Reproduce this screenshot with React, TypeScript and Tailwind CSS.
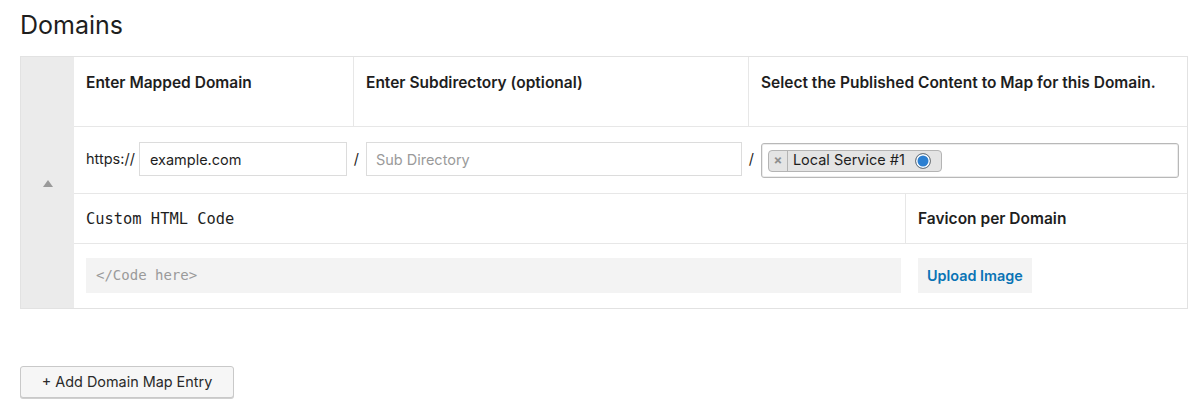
import React from "react";

const font = "font-['Inter','Noto_Sans',sans-serif]";

export default function App() {
  return (
    <div className={`w-[1200px] h-[415px] bg-white px-5 pt-[7px] text-[#1e1e1e] ${font}`}>
      <h1 className="text-[25px] leading-[36px] font-normal text-[#1e1e1e]">Domains</h1>

      <div className="mt-[13px] flex border border-[#e2e2e2] w-[1168px]">
        {/* drag handle column */}
        <div className="w-[53px] shrink-0 bg-[#ebebeb] flex items-center justify-center">
          <span className="block w-0 h-0 border-l-[5px] border-r-[5px] border-b-[7px] border-l-transparent border-r-transparent border-b-[#9a9a9a] mt-[2px]" />
        </div>

        <div className="flex-1 flex flex-col">
          {/* header row */}
          <div className="flex h-[70px] border-b border-[#e7e7e7] text-[15.5px] font-semibold">
            <div className="w-[280px] px-3 pt-[14px] border-r border-[#e7e7e7]">Enter Mapped Domain</div>
            <div className="w-[395px] px-3 pt-[14px] border-r border-[#e7e7e7]">Enter Subdirectory (optional)</div>
            <div className="flex-1 px-3 pt-[14px]">Select the Published Content to Map for this Domain.</div>
          </div>

          {/* inputs row */}
          <div className="flex items-start h-[67px] border-b border-[#e7e7e7] pl-3 pr-2 pt-[15px] text-[14.5px]">
            <span className="mr-[4px] leading-[34px]">https://</span>
            <input
              className="w-[208px] h-[34px] border border-[#dcdcdc] px-[10px] text-[14.5px] text-[#1e1e1e] outline-none"
              defaultValue="example.com"
            />
            <span className="w-[19px] text-center leading-[34px]">/</span>
            <input
              className="w-[376px] h-[34px] border border-[#dcdcdc] px-[9px] text-[14.5px] placeholder:text-[#9a9a9a] outline-none"
              placeholder="Sub Directory"
            />
            <span className="w-[19px] text-center leading-[34px]">/</span>
            <div className="flex-1 h-[35px] mt-[1px] border border-[#b8b8b8] rounded-[3px] flex items-center px-[6px] shadow-[inset_0_0_0_1px_#ececec]">
              <div className="flex items-center h-[22px] border border-[#b4b4b4] bg-[#e4e4e4] rounded-[4px] text-[14.5px] leading-none">
                <span className="w-[19px] h-full flex items-center justify-center text-[13px] font-bold text-[#8f8f8f] border-r border-[#b4b4b4]">×</span>
                <span className="pl-[5px] pr-[10px]">Local Service #1</span>
                <span className="w-[16px] h-[16px] rounded-full bg-[#2b7fd1] border-[1.5px] border-[#7a7a7a] shadow-[inset_0_0_0_1.5px_#ffffff] mr-[10px]" />
              </div>
            </div>
          </div>

          {/* custom html header row */}
          <div className="flex h-[50px] border-b border-[#e7e7e7]">
            <div className="w-[832px] px-3 pt-[2px] flex items-center border-r border-[#e7e7e7] font-['DejaVu_Sans_Mono',monospace] text-[15.4px]">
              Custom HTML Code
            </div>
            <div className="flex-1 px-3 flex items-center text-[15.5px] font-semibold">Favicon per Domain</div>
          </div>

          {/* code + upload row */}
          <div className="flex h-[64px] pt-[14px]">
            <div className="w-[832px] pl-3 pr-[5px]">
              <div className="h-[35px] bg-[#f3f3f3] px-[10px] flex items-center font-['DejaVu_Sans_Mono',monospace] text-[14px] text-[#9a9a9a]">
                &lt;/Code here&gt;
              </div>
            </div>
            <div className="flex-1 px-3">
              <button className="h-[35px] px-[9px] bg-[#f3f3f3] text-[#0a73b5] text-[14.4px] font-semibold">Upload Image</button>
            </div>
          </div>
        </div>
      </div>

      <button className="mt-[57px] w-[214px] h-[32px] border border-[#c9c9c9] rounded-[3px] bg-[#f6f6f6] text-[14.4px] text-[#2a2a2a] shadow-[0_1px_0_#d0d0d0]">
        + Add Domain Map Entry
      </button>
    </div>
  );
}
